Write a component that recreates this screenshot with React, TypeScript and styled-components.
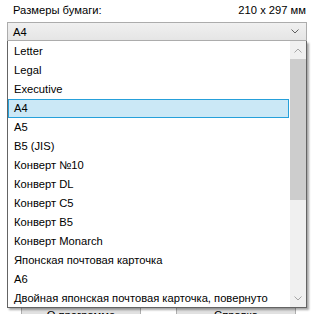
import React from "react";
import styled, { createGlobalStyle } from "styled-components";

const GlobalStyle = createGlobalStyle`
  html, body {
    margin: 0;
    padding: 0;
    background: #ffffff;
  }
  body {
    font-family: "Liberation Sans", Arial, sans-serif;
    font-size: 11.2px;
    color: #000000;
  }
  * {
    box-sizing: border-box;
  }
`;

const sizes = [
  "Letter",
  "Legal",
  "Executive",
  "A4",
  "A5",
  "B5 (JIS)",
  "Конверт №10",
  "Конверт DL",
  "Конверт C5",
  "Конверт B5",
  "Конверт Monarch",
  "Японская почтовая карточка",
  "A6",
  "Двойная японская почтовая карточка, повернуто",
];

const Chevron: React.FC<{ up?: boolean; color?: string }> = ({ up, color = "#a6a6a6" }) => (
  <svg width="8" height="5" viewBox="0 0 8 5">
    <path
      d={up ? "M0.5 4.5 L4 1 L7.5 4.5" : "M0.5 0.5 L4 4 L7.5 0.5"}
      fill="none"
      stroke={color}
      strokeWidth="1"
    />
  </svg>
);

const App: React.FC = () => {
  const selected = "A4";

  return (
    <Page>
      <GlobalStyle />
      <Header>
        <span>Размеры бумаги:</span>
        <span>210 x 297 мм</span>
      </Header>
      <Combo>
        <span>{selected}</span>
        <Chevron color="#606060" />
      </Combo>
      <Body>
        <ButtonRow>
          <Button>О программе</Button>
          <Button>Справка</Button>
        </ButtonRow>
        <Dropdown>
          <List>
            {sizes.map((s) => (
              <Item key={s} $active={s === selected}>
                {s}
              </Item>
            ))}
          </List>
          <ScrollBar>
            <Arrow>
              <Chevron up />
            </Arrow>
            <Track>
              <Thumb />
            </Track>
            <Arrow>
              <Chevron />
            </Arrow>
          </ScrollBar>
        </Dropdown>
      </Body>
    </Page>
  );
};

export default App;

const Page = styled.div`
  width: 313px;
  height: 314px;
  overflow: hidden;
  padding: 0 6px 0 7px;
`;

const Header = styled.div`
  display: flex;
  justify-content: space-between;
  align-items: center;
  height: 22px;
  padding: 1px 1px 3px 6px;
`;

const Combo = styled.div`
  display: flex;
  justify-content: space-between;
  align-items: center;
  height: 19px;
  padding: 0 7px 0 5px;
  border: 1px solid #acacac;
  background: linear-gradient(#f0f0f0, #e5e5e5);
`;

const Body = styled.div`
  position: relative;
`;

const ButtonRow = styled.div`
  display: flex;
  gap: 35px;
  padding: 262px 0 0 14px;
`;

const Button = styled.div`
  width: 120px;
  height: 23px;
  border: 1px solid #adadad;
  background: #e1e1e1;
  display: flex;
  align-items: center;
  justify-content: center;
`;

const Dropdown = styled.div`
  position: absolute;
  top: 0;
  left: 0;
  width: 300px;
  height: 267px;
  display: flex;
  background: #ffffff;
  border: 1px solid #646464;
  border-top: none;
  box-shadow: 2px 2px 2px rgba(0, 0, 0, 0.35);
  overflow: hidden;
`;

const List = styled.div`
  flex: 1;
  padding: 1px 1px 0 0;
  overflow: hidden;
`;

const Item = styled.div<{ $active?: boolean }>`
  height: 19px;
  line-height: 19px;
  padding-left: 5px;
  white-space: nowrap;
  border: 1px solid ${(p) => (p.$active ? "#26a0da" : "transparent")};
  border-top: 0;
  border-bottom: 0;
  box-shadow: ${(p) => (p.$active ? "inset 0 1px 0 #26a0da, inset 0 -1px 0 #26a0da" : "none")};
  background: ${(p) => (p.$active ? "#cbe8f6" : "transparent")};
`;

const ScrollBar = styled.div`
  width: 16px;
  display: flex;
  flex-direction: column;
  background: #f0f0f0;
`;

const Arrow = styled.div`
  height: 18px;
  display: flex;
  align-items: center;
  justify-content: center;
`;

const Track = styled.div`
  flex: 1;
`;

const Thumb = styled.div`
  height: 141px;
  background: #cdcdcd;
`;
